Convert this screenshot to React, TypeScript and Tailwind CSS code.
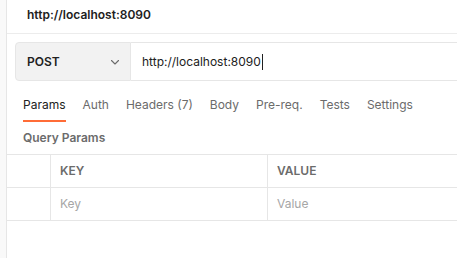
import React from 'react';

// Postman-like request pane
const tabs = ['Params', 'Auth', 'Headers (7)', 'Body', 'Pre-req.', 'Tests', 'Settings'];

const ChevronDown = () => (
  <svg width="12" height="12" viewBox="0 0 12 12" fill="none">
    <path d="M2.5 4.5L6 8L9.5 4.5" stroke="#6b6b6b" strokeWidth="1.1" strokeLinecap="round" strokeLinejoin="round" />
  </svg>
);

const App: React.FC = () => {
  return (
    <div
      className="flex h-[258px] w-[457px] overflow-hidden bg-white"
      style={{ fontFamily: 'Inter, "Noto Sans", sans-serif' }}
    >
      <div className="w-[7px] shrink-0 border-r border-[#e6e6e6] bg-[#f9f9f9]" />
      <div className="flex min-w-0 flex-1 flex-col">
        {/* title */}
        <div className="h-[34px] shrink-0 border-b border-[#ececec] pl-[20px] pt-[1px]">
          <span className="text-[12px] font-semibold leading-[16px] text-[#212121]">http://localhost:8090</span>
        </div>

        {/* request bar */}
        <div className="mt-[8px] ml-[8px] flex h-[39px] shrink-0">
          <div className="flex w-[116px] items-center justify-between rounded-l-[4px] border border-[#e6e6e6] bg-[#f2f2f2] pl-[11px] pr-[9px]">
            <span className="text-[12px] font-semibold text-[#212121]">POST</span>
            <ChevronDown />
          </div>
          <div className="flex flex-1 items-center border-y border-[#e6e6e6] pl-[11px]">
            <span className="text-[12px] text-[#212121]">http://localhost:8090</span>
            <span className="ml-[1px] h-[16px] w-[1px] bg-[#212121]" />
          </div>
        </div>

        {/* tabs */}
        <div className="flex h-[41px] shrink-0 items-end gap-[17px] pl-[16px]">
          {tabs.map((t, i) => (
            <div
              key={t}
              className={
                i === 0
                  ? 'flex h-[41px] flex-col justify-between pt-[16px] text-[12px] text-[#212121]'
                  : 'flex h-[41px] flex-col justify-between pt-[16px] text-[12px] text-[#6b6b6b]'
              }
            >
              <span className="leading-[16px]">{t}</span>
              <span className={i === 0 ? 'h-[2px] bg-[#ff6c37]' : 'h-[2px]'} />
            </div>
          ))}
        </div>

        {/* query params */}
        <div className="flex h-[32px] shrink-0 items-center pl-[16px]">
          <span className="text-[12px] font-semibold text-[#6b6b6b]">Query Params</span>
        </div>

        <div className="grid grid-cols-[44px_217px_1fr] border-t border-[#e6e6e6]">
          <div className="h-[33px] border-r border-b border-[#e6e6e6]" />
          <div className="flex h-[33px] items-center border-r border-b border-[#e6e6e6] pl-[9px] text-[12px] font-semibold text-[#6b6b6b]">
            KEY
          </div>
          <div className="flex h-[33px] items-center border-b border-[#e6e6e6] pl-[9px] text-[12px] font-semibold text-[#6b6b6b]">
            VALUE
          </div>
          <div className="h-[33px] border-r border-b border-[#e6e6e6]" />
          <div className="flex h-[33px] items-center border-r border-b border-[#e6e6e6] pl-[9px] text-[12px] text-[#a6a6a6]">
            Key
          </div>
          <div className="flex h-[33px] items-center border-b border-[#e6e6e6] pl-[9px] text-[12px] text-[#a6a6a6]">
            Value
          </div>
        </div>
      </div>
    </div>
  );
};

export default App;
